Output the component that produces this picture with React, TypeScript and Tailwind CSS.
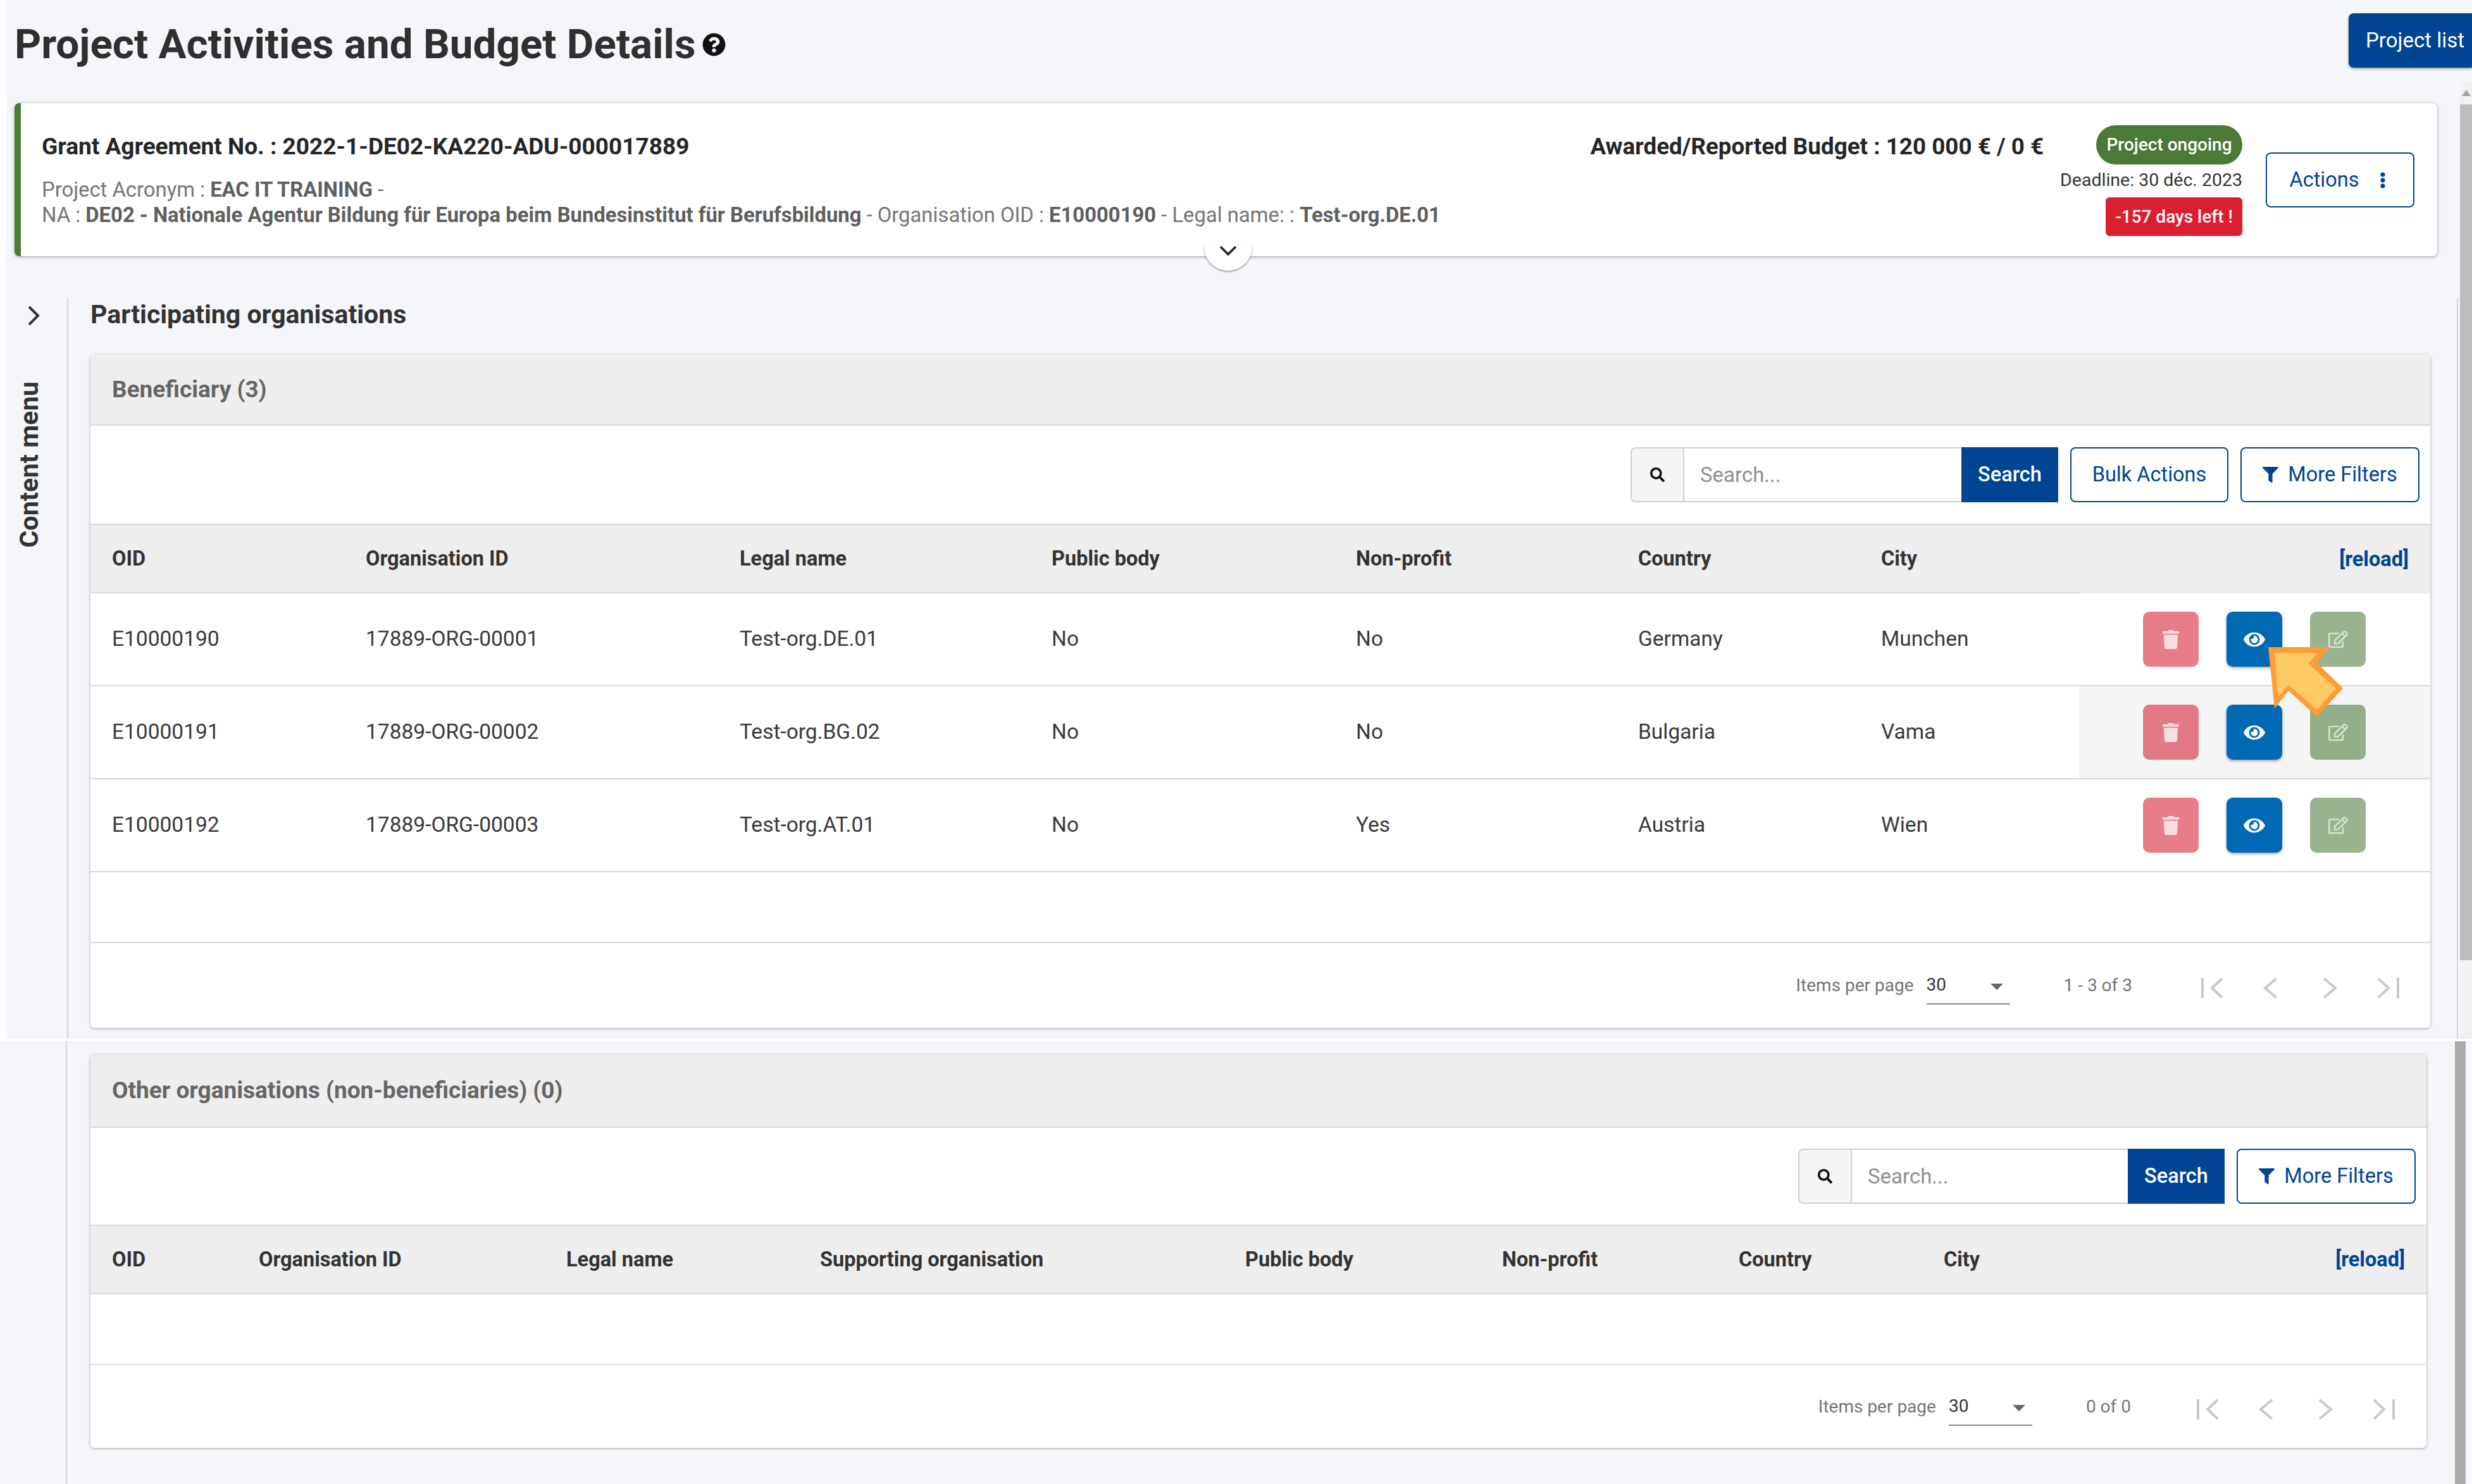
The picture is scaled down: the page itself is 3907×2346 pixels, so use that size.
import React from "react";
import { FaEye, FaEllipsisV, FaFilter, FaQuestionCircle, FaRegEdit, FaSearch, FaTrash } from "react-icons/fa";

function OutlineBtn({ className, children }: { className: string; children: React.ReactNode }) {
  return (
    <div className={"flex items-center justify-center rounded-[8px] border-[2.5px] border-[#004494] bg-white text-[32.5px] text-[#004494] " + className}>
      {children}
    </div>
  );
}

function SearchBox({ inputW }: { inputW: string }) {
  return (
    <div className="flex h-[87px] items-stretch">
      <div className="flex w-[85px] items-center justify-center rounded-l-[8px] border-2 border-r-2 border-[#cfcfcf] bg-[#f5f5f5] text-[#111]">
        <FaSearch size={23} />
      </div>
      <div className={"flex items-center border-y-2 border-[#cfcfcf] bg-white pl-[25px] text-[33px] text-[#8f8f8f] " + inputW}>Search...</div>
      <div className="flex w-[153px] items-center justify-center bg-[#004494] text-[32.5px] font-medium text-white">Search</div>
    </div>
  );
}

function Chevron({ dir, bar }: { dir: "l" | "r"; bar?: boolean }) {
  return (
    <div className="flex w-[93px] justify-center">
      <svg width="36" height="34" viewBox="0 0 36 34" fill="none" stroke="#c9c9c9" strokeWidth="4">
        {dir === "l" && !bar && <path d="M27 2 L9 17 L27 32" />}
        {dir === "r" && !bar && <path d="M9 2 L27 17 L9 32" />}
        {dir === "l" && bar && <path d="M34 2 L18 17 L34 32 M3 1 V33" />}
        {dir === "r" && bar && <path d="M2 2 L18 17 L2 32 M33 1 V33" />}
      </svg>
    </div>
  );
}

function Footer({ range, className, rangeClass }: { range: string; className: string; rangeClass: string }) {
  return (
    <div className={"flex items-center justify-end " + className}>
      <span className="text-[28px] text-[#757575]">Items per page</span>
      <div className="relative ml-[20px] flex h-[60px] w-[132px] items-center border-b-[2.5px] border-[#8c8c8c] text-[28px] text-[#333]">
        30
        <span className="absolute right-[11px] top-[27px] h-0 w-0 border-x-[10px] border-t-[10px] border-x-transparent border-t-[#666]" />
      </div>
      <span className={"ml-[85px] text-[28px] text-[#757575] " + rangeClass}>{range}</span>
      <div className="flex pt-[8px]">
        <Chevron dir="l" bar />
        <Chevron dir="l" />
        <Chevron dir="r" />
        <Chevron dir="r" bar />
      </div>
    </div>
  );
}

function ActionBtn({ bg, shadow, children }: { bg: string; shadow?: boolean; children: React.ReactNode }) {
  return (
    <div className={"flex h-[87px] w-[88px] items-center justify-center rounded-[10px] " + bg + (shadow ? " shadow-[0_2px_4px_rgba(0,0,0,0.35)]" : "")}>
      {children}
    </div>
  );
}

const beneficiaries = [
  ["E10000190", "17889-ORG-00001", "Test-org.DE.01", "No", "No", "Germany", "Munchen"],
  ["E10000191", "17889-ORG-00002", "Test-org.BG.02", "No", "No", "Bulgaria", "Vama"],
  ["E10000192", "17889-ORG-00003", "Test-org.AT.01", "No", "Yes", "Austria", "Wien"],
];

function Row({ cells, hover }: { cells: string[]; hover?: boolean }) {
  return (
    <div className="grid h-[147px] grid-cols-[401px_591px_493px_481px_446px_384px_347px_1fr] border-b-2 border-[#d8d8d8] text-[33.5px] text-[#3a3a3a]">
      {cells.map((c) => (
        <div key={c} className="flex items-center pl-[34px]">{c}</div>
      ))}
      <div className={"flex items-center gap-[44px] pl-[101px] " + (hover ? "bg-[#f4f4f4]" : "bg-white")}>
        <ActionBtn bg={hover ? "bg-[#e27985]" : "bg-[#e87d8a]"}><FaTrash size={30} className="text-[#f8dde0]" /></ActionBtn>
        <ActionBtn bg="bg-[#0069b4]" shadow><FaEye size={34} className="text-white" /></ActionBtn>
        <ActionBtn bg={hover ? "bg-[#93ae88]" : "bg-[#98b38e]"}><FaRegEdit size={31} className="text-[#d5e2d0]" /></ActionBtn>
      </div>
    </div>
  );
}

const cardHead = "flex items-center border-b-2 border-[#d8d8d8] bg-[#eeeeee] pl-[34px] text-[37px] font-bold text-[#666666]";
const tableHead = "grid h-[110px] border-t-2 border-[#d8d8d8] bg-[#eeeeee] text-[32.5px] font-bold text-[#333333]";
const headCell = "flex items-center border-b-2 border-[#d8d8d8] pl-[34px]";

export default function App() {
  return (
    <div className="relative h-[2346px] w-[3907px] overflow-hidden bg-white font-['Roboto',sans-serif]">
      {/* upper capture */}
      <div className="ml-[10px] flex h-[1642px] flex-col bg-[#f5f6fa]">
        <div className="flex h-[129px] items-start justify-between">
          <div className="ml-[13px] mt-[30px] flex items-center gap-[10px]">
            <h1 className="text-[65.6px] font-bold leading-[80px] text-[#2f2f2f]">Project Activities and Budget Details</h1>
            <FaQuestionCircle size={37} className="text-[#111]" />
          </div>
          <div className="mt-[21px] flex h-[86px] w-[195px] items-center rounded-l-[8px] bg-[#004494] pl-[27px] text-[33px] text-white shadow-[0_2px_4px_rgba(0,0,0,0.35)]">
            Project list
          </div>
        </div>
        <div className="flex flex-1">
          <div className="flex flex-1 flex-col pt-[34px]">
            {/* summary card */}
            <div className="relative ml-[13px] mr-[36px] flex h-[242px] rounded-[8px] border-l-[10px] border-[#4a7c37] bg-white shadow-[0_1px_5px_rgba(0,0,0,0.4)]">
              <div className="flex-1 pl-[33px] pt-[49px]">
                <div className="text-[37px] font-bold leading-[40px] text-[#262626]">Grant Agreement No. : 2022-1-DE02-KA220-ADU-000017889</div>
                <div className="mt-[29px] text-[32.8px] leading-[39.5px] text-[#757575]">
                  Project Acronym : <b className="font-bold text-[#5f5f5f]">EAC IT TRAINING</b> -
                  <br />
                  NA : <b className="font-bold text-[#5f5f5f]">DE02 - Nationale Agentur Bildung für Europa beim Bundesinstitut für Berufsbildung</b> - Organisation OID : <b className="font-bold text-[#5f5f5f]">E10000190</b> - Legal name: : <b className="font-bold text-[#5f5f5f]">Test-org.DE.01</b>
                </div>
              </div>
              <div className="mr-[26px] pt-[49px] text-[36.8px] font-bold leading-[40px] text-[#262626]">Awarded/Reported Budget : 120 000 € / 0 €</div>
              <div className="flex flex-col items-end pt-[35px]">
                <div className="flex h-[62px] w-[231px] items-center justify-center rounded-full bg-[#4a7a35] text-[28px] font-medium text-white">Project ongoing</div>
                <div className="mt-[5px] flex h-[40px] items-center text-[28.5px] text-[#333]">Deadline: 30 déc. 2023</div>
                <div className="mt-[7px] flex h-[61px] w-[216px] items-center justify-center rounded-[6px] bg-[#da1f30] text-[28px] font-medium text-white">-157 days left !</div>
              </div>
              <div className="ml-[37px] mr-[36px] pt-[78px]">
                <OutlineBtn className="h-[87px] w-[235px] gap-[24px]">
                  Actions
                  <FaEllipsisV size={26} />
                </OutlineBtn>
              </div>
              <div className="absolute bottom-[-23px] left-[1870px] flex h-[44px] w-[76px] justify-center rounded-b-full bg-white shadow-[0_2px_3px_rgba(0,0,0,0.35)]">
                <svg width="30" height="20" viewBox="0 0 30 20" fill="none" stroke="#222" strokeWidth="3.5" className="mt-[3px]">
                  <path d="M3 3 L15 15 L27 3" />
                </svg>
              </div>
            </div>
            {/* body */}
            <div className="mt-[67px] flex flex-1">
              <div className="relative w-[96px] pt-[11px]">
                <svg width="20" height="32" viewBox="0 0 20 32" fill="none" stroke="#333" strokeWidth="4" className="ml-[33px]">
                  <path d="M3 2 L17 16 L3 30" />
                </svg>
                <div className="ml-[14px] mt-[88px] rotate-180 text-[41.5px] font-bold leading-[44px] text-[#333] [writing-mode:vertical-rl]">Content menu</div>
              </div>
              <div className="mr-[3px] flex-1 border-x-2 border-[#d4d6da] pl-[35px] pr-[42px]">
                <div className="flex h-[88px] items-start text-[41px] font-bold leading-[50px] text-[#333]">Participating organisations</div>
                <div className="flex h-[1065px] flex-col rounded-[6px] bg-white shadow-[0_1px_4px_rgba(0,0,0,0.35)]">
                  <div className={cardHead + " h-[113px]"}>Beneficiary (3)</div>
                  <div className="flex h-[155px] items-center justify-end gap-[19px] pr-[17px]">
                    <SearchBox inputW="w-[438px]" />
                    <OutlineBtn className="h-[87px] w-[250px]">Bulk Actions</OutlineBtn>
                    <OutlineBtn className="h-[87px] w-[283px] gap-[15px]"><FaFilter size={25} />More Filters</OutlineBtn>
                  </div>
                  <div className={tableHead + " grid-cols-[401px_591px_493px_481px_446px_384px_347px_1fr]"}>
                    {["OID", "Organisation ID", "Legal name", "Public body", "Non-profit", "Country", "City"].map((h) => (
                      <div key={h} className={headCell}>{h}</div>
                    ))}
                    <div className="flex items-center justify-end pr-[34px] text-[#004494]">[reload]</div>
                  </div>
                  {beneficiaries.map((r, i) => (
                    <Row key={r[0]} cells={r} hover={i === 1} />
                  ))}
                  <div className="h-[112px] border-b-2 border-[#d8d8d8]" />
                  <Footer range="1 - 3 of 3" className="flex-1 pr-[20px]" rangeClass="mr-[79px]" />
                </div>
              </div>
            </div>
          </div>
          {/* scrollbar */}
          <div className="flex w-[19px] flex-col bg-[#f1f1f1]">
            <div className="flex h-[36px] items-center justify-center">
              <span className="h-0 w-0 border-x-[7px] border-b-[10px] border-x-transparent border-b-[#a3a3a3]" />
            </div>
            <div className="h-[1353px] bg-[#bdbdbd]" />
          </div>
        </div>
      </div>
      <div className="h-[4px] bg-white" />
      {/* lower capture */}
      <div className="flex h-[700px] bg-[#f5f6fa]">
        <div className="w-[106px] shrink-0 border-r-2 border-[#d4d6da]" />
        <div className="w-[3769px] pl-[37px] pr-[40px] pt-[21px]">
          <div className="flex h-[622px] flex-col rounded-[6px] bg-white shadow-[0_1px_4px_rgba(0,0,0,0.35)]">
            <div className={cardHead + " h-[116px]"}>Other organisations (non-beneficiaries) (0)</div>
            <div className="flex h-[153px] items-center justify-end gap-[19px] pr-[17px]">
              <SearchBox inputW="w-[436px]" />
              <OutlineBtn className="h-[87px] w-[283px] gap-[15px]"><FaFilter size={25} />More Filters</OutlineBtn>
            </div>
            <div className={tableHead + " grid-cols-[232px_486px_401px_672px_406px_374px_324px_1fr]"}>
              {["OID", "Organisation ID", "Legal name", "Supporting organisation", "Public body", "Non-profit", "Country"].map((h) => (
                <div key={h} className={headCell}>{h}</div>
              ))}
              <div className="flex items-center justify-between border-b-2 border-[#d8d8d8] pl-[34px] pr-[34px]">
                City
                <span className="text-[#004494]">[reload]</span>
              </div>
            </div>
            <div className="h-[112px] border-b-2 border-[#e2e2e2]" />
            <Footer range="0 of 0" className="flex-1 pr-[21px]" rangeClass="mr-[74px]" />
          </div>
        </div>
        <div className="ml-[5px] w-[17px] bg-[#ababab]" />
      </div>
      {/* pointer overlay */}
      <svg className="absolute left-[3580px] top-[1018px]" width="130" height="122" viewBox="3580 1018 130 122">
        <polygon points="3585,1023 3682,1023 3662,1048 3703,1088 3662,1133 3617,1092 3595,1120" fill="#ff9c33" />
        <polygon points="3595,1032 3663,1032 3648,1049 3692,1088 3662,1122 3617,1083 3600,1102" fill="#ffc966" />
      </svg>
    </div>
  );
}
